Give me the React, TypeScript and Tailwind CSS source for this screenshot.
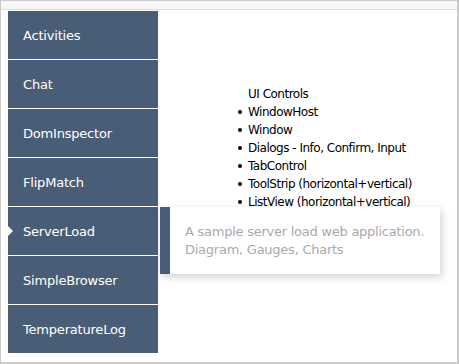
import React from "react";

const items = [
  "Activities",
  "Chat",
  "DomInspector",
  "FlipMatch",
  "ServerLoad",
  "SimpleBrowser",
  "TemperatureLog",
];

const list = [
  "WindowHost",
  "Window",
  "Dialogs - Info, Confirm, Input",
  "TabControl",
  "ToolStrip (horizontal+vertical)",
  "ListView (horizontal+vertical)",
];

export default function App() {
  return (
    <div
      className="relative w-[459px] h-[364px] bg-white border-l border-t border-r-2 border-b-2 border-[#cccccc] flex flex-col"
      style={{ fontFamily: "'DejaVu Sans', Tahoma, Verdana, sans-serif" }}
    >
      <div className="h-[9px] bg-[#f7f7f7] border-b border-[#dddddd] shrink-0" />
      <div className="flex flex-1 pl-[7px] pt-[1px]">
        <div className="w-[150px] flex flex-col gap-[1px]">
          {items.map((it) => (
            <div
              key={it}
              className="relative h-[48px] bg-[#4a5d76] flex items-center pl-[15px] pt-[2px] text-white text-[13px] tracking-[-0.2px]"
            >
              {it === "ServerLoad" && (
                <div className="absolute left-0 top-1/2 -translate-y-1/2 w-0 h-0 border-y-[5px] border-y-transparent border-l-[5px] border-l-white" />
              )}
              <span>{it}</span>
            </div>
          ))}
        </div>
        <div className="flex-1 pl-[80px] pt-[74px] text-[12px] leading-[18px] text-black tracking-[-0.5px]">
          <div className="pl-[10px]">UI Controls</div>
          <ul>
            {list.map((l) => (
              <li key={l} className="flex items-center">
                <span className="w-[4px] h-[4px] rounded-full bg-black mr-[6px] shrink-0" />
                <span>{l}</span>
              </li>
            ))}
          </ul>
        </div>
      </div>
      <div className="absolute left-[159px] top-[206px] w-[280px] h-[67px] flex shadow-[2px_3px_8px_rgba(0,0,0,0.18)]">
        <div className="w-[10px] bg-[#4a5d76]" />
        <div className="flex-1 bg-white pl-[15px] pt-[16px] text-[13px] leading-[18px] text-[#aaaaaa] tracking-[-0.25px]">
          <div>A sample server load web application.</div>
          <div>Diagram, Gauges, Charts</div>
        </div>
      </div>
    </div>
  );
}
